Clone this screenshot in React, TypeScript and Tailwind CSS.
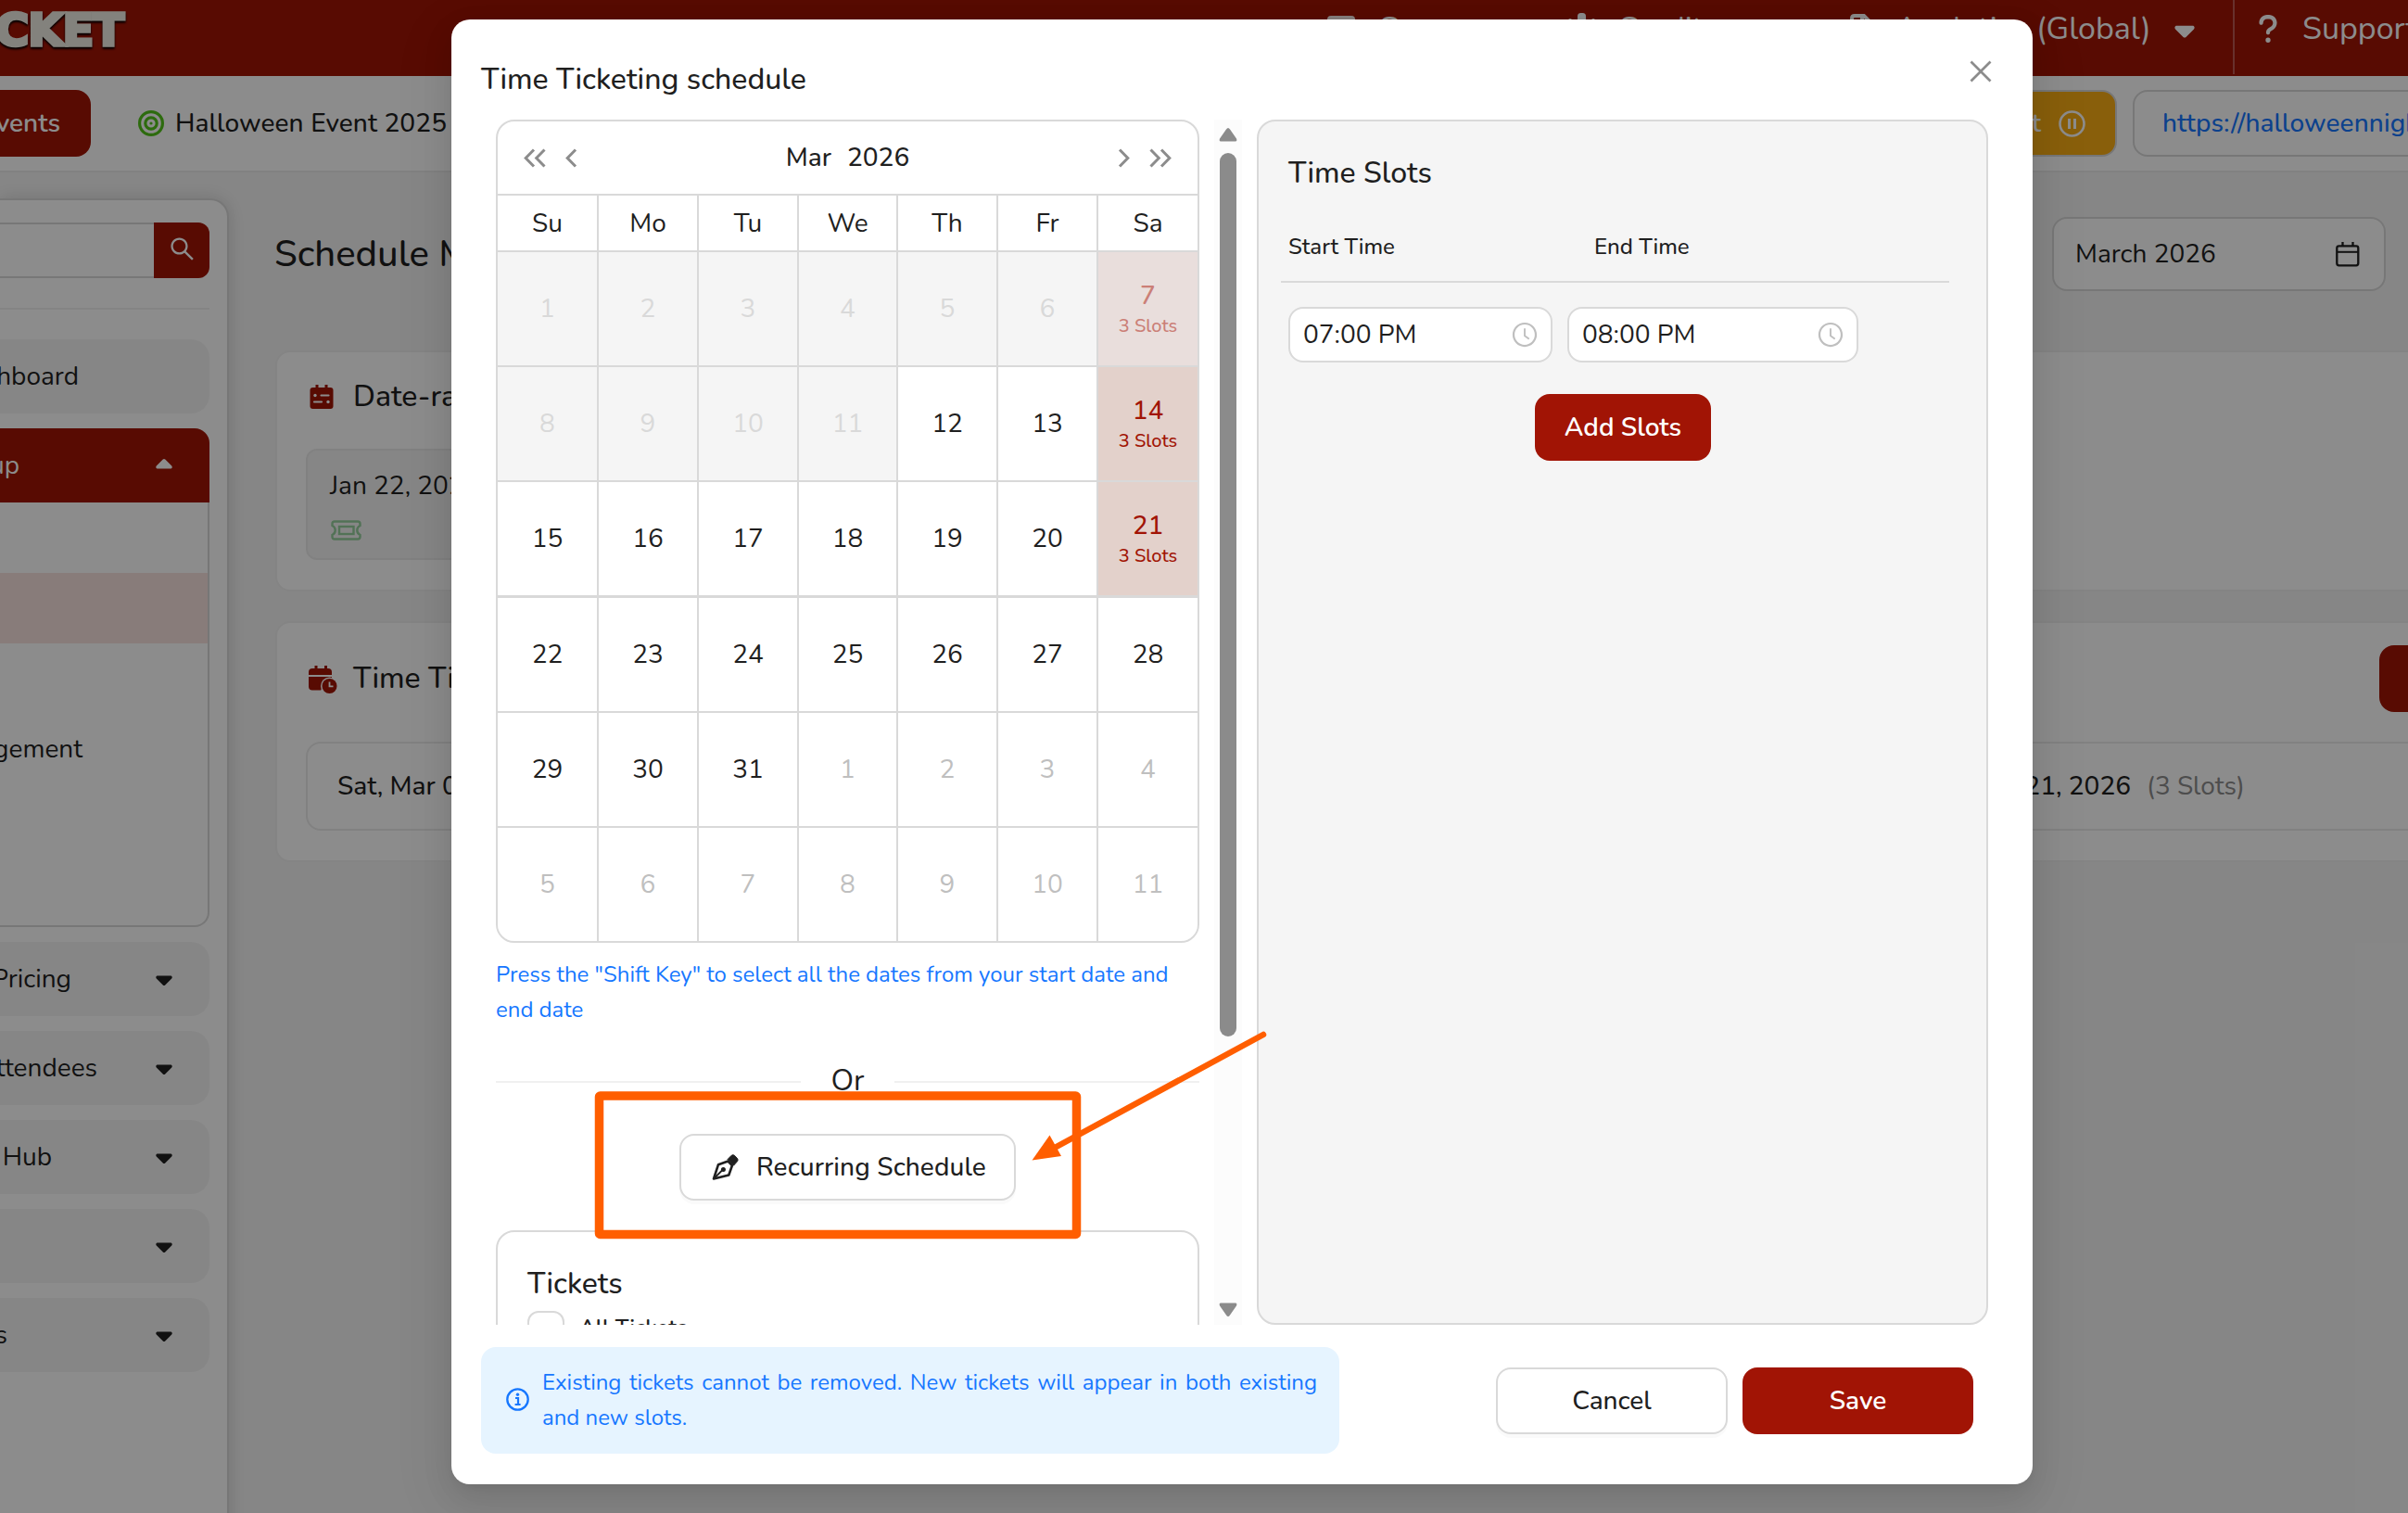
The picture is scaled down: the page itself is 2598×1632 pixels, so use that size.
import { useState } from "react";
import {
  AiOutlineClockCircle,
  AiOutlineClose,
  AiOutlineSearch,
} from "react-icons/ai";
import { FaCaretDown, FaCaretUp, FaQuestion } from "react-icons/fa6";

interface IDay {
  day: number;
  state: "past" | "active" | "outside";
  slots?: number;
}

const weekDays = ["Su", "Mo", "Tu", "We", "Th", "Fr", "Sa"];

const slotDays: Record<number, number> = { 7: 3, 14: 3, 21: 3 };

// Six full weeks starting on Sunday, Mar 1 2026
const days: IDay[] = Array.from({ length: 42 }, (_, index) => {
  const day = index + 1;
  if (day > 31) {
    return { day: day - 31, state: "outside" };
  }
  return { day, state: day < 12 ? "past" : "active", slots: slotDays[day] };
});

const menuItems = [
  { label: "Pricing", width: "w-[77px]" },
  { label: "Attendees", width: "w-[105px]" },
  { label: "Hub", width: "w-[56px]" },
  { label: "", width: "w-0" },
  { label: "s", width: "w-[8px]" },
];

const subMenuItems = [
  { label: "", active: false },
  { label: "", active: true },
  { label: "", active: false },
  { label: "Management", active: false },
  { label: "", active: false },
  { label: "", active: false },
];

function Chevrons({ count, right }: { count: number; right?: boolean }) {
  return (
    <svg
      className={right ? "rotate-180" : ""}
      width={count === 2 ? 24 : 13}
      height="21"
      viewBox={count === 2 ? "0 0 24 21" : "0 0 13 21"}
      fill="none"
      stroke="#8c8c8c"
      strokeWidth="3"
    >
      <path d="M11 1.5 2.2 10.5 11 19.5" />
      {count === 2 && <path d="M22.5 1.5 13.7 10.5 22.5 19.5" />}
    </svg>
  );
}

function PenIcon() {
  return (
    <svg width="29" height="29" viewBox="0 0 29 29" fill="none">
      <path
        d="M2 26.5 7 11.2 17.5 7.6l4.4 4.6-3.6 10.3L2 26.5Z"
        stroke="#1f1f1f"
        strokeWidth="2.6"
        strokeLinejoin="round"
      />
      <path d="M3 25.5 11.5 17" stroke="#1f1f1f" strokeWidth="1.8" />
      <circle cx="12.4" cy="16.4" r="2.5" fill="#1f1f1f" />
      <path
        d="M17 5.6 21.3 1.2q1.4-1 3 0l3.3 3.4q1 1.5 0 3L23.5 12.2Z"
        fill="#1f1f1f"
        stroke="#1f1f1f"
        strokeLinejoin="round"
      />
    </svg>
  );
}

function InfoIcon() {
  return (
    <svg
      className="mr-[14px] shrink-0 -translate-y-px"
      width="25"
      height="25"
      viewBox="0 0 25 25"
      fill="none"
      stroke="#1677ff"
    >
      <circle cx="12.5" cy="12.5" r="11.2" strokeWidth="2.3" />
      <path d="M10 11h3v7M9.6 18h6" strokeWidth="2.2" />
      <circle cx="12.5" cy="7.2" r="1.7" fill="#1677ff" stroke="none" />
    </svg>
  );
}

function CalendarOutline() {
  return (
    <svg width="26" height="27" viewBox="0 0 26 27" fill="none" stroke="#1f1f1f">
      <rect x="1.3" y="4.3" width="23" height="21" rx="2.2" strokeWidth="2.3" />
      <path d="M1.5 10.8h22.8" strokeWidth="2" />
      <path d="M7.5 0v5M18.5 0v5" strokeWidth="2.3" />
    </svg>
  );
}

function CalendarFilled() {
  return (
    <svg width="26" height="27" viewBox="0 0 26 27">
      <rect x="0.5" y="3" width="25" height="23" rx="3" fill="#a11405" />
      <path d="M8 0v6M18 0v6" stroke="#a11405" strokeWidth="3" />
      <path
        d="M12.5 11.5h8M5 18.5h8"
        stroke="#fff"
        strokeWidth="2.2"
        strokeLinecap="round"
      />
      <circle cx="6" cy="11.5" r="1.7" fill="#fff" />
      <circle cx="20" cy="18.5" r="1.7" fill="#fff" />
    </svg>
  );
}

function CalendarClock() {
  return (
    <svg width="31" height="30" viewBox="0 0 31 30">
      <path d="M0 10V7q0-4 4-4h17q4 0 4 4v3Z" fill="#a11405" />
      <path d="M8 0v5M18.5 0v5" stroke="#a11405" strokeWidth="3" />
      <path d="M0 12h25v3L13 26.5H4q-4 0-4-4Z" fill="#a11405" />
      <circle cx="22.5" cy="22" r="9.5" fill="#fff" />
      <circle cx="22.5" cy="22" r="8" fill="#a11405" />
      <path d="M22.5 17.5v4.8h4" fill="none" stroke="#fff" strokeWidth="1.8" />
    </svg>
  );
}

function TicketIcon() {
  return (
    <svg width="33" height="22" viewBox="0 0 33 22" fill="none" stroke="#95d09d">
      <path
        d="M4 1.5h25q2.500 0 2.500 2.500v2q-3.200 1.500-3.200 5t3.200 5v2q0 2.500-2.500 2.500H4q-2.500 0-2.500-2.500v-2q3.200-1.500 3.200-5t-3.200-5V4q0-2.500 2.500-2.500Z"
        strokeWidth="2.4"
      />
      <rect x="9" y="7" width="15.5" height="8" strokeWidth="2.4" />
    </svg>
  );
}

function TargetIcon() {
  return (
    <svg
      className="shrink-0"
      width="28"
      height="28"
      viewBox="0 0 28 28"
      fill="none"
      stroke="#52c41a"
    >
      <circle cx="14" cy="14" r="12.4" strokeWidth="3.2" />
      <circle cx="14" cy="14" r="6.2" strokeWidth="3.2" />
      <circle cx="14" cy="14" r="1.6" fill="#52c41a" stroke="none" />
    </svg>
  );
}

function TopBar() {
  return (
    <header className="flex h-[82px] bg-[#a11405] text-[34px] leading-[63px] text-white">
      <div className="flex w-[138px] shrink-0 justify-end overflow-hidden pr-[5px]">
        <span className="origin-right scale-x-[1.03] font-['DejaVu_Sans'] text-[48px] font-bold leading-[65px] tracking-[-1px] text-[#efede3] [-webkit-text-stroke:3.500px_#efede3] drop-shadow-[0_2px_1px_#000]">
          CKET
        </span>
      </div>
      <div className="ml-[1294px] flex w-[257px] shrink-0">
        <span className="mt-[17px] h-7 w-[30px] rounded bg-white/90" />
        <span className="ml-[24px]">Groups</span>
      </div>
      <div className="flex w-[306px] shrink-0">
        <svg className="mt-[14px]" width="34" height="34" viewBox="0 0 34 34" fill="#fff">
          <rect x="13" width="9" height="14" rx="3.5" />
          <rect x="3" y="6" width="4" height="10" rx="2" />
          <rect x="28" y="6" width="4" height="10" rx="2" />
        </svg>
        <span className="ml-[22px]">Credits</span>
      </div>
      <div className="flex w-[414px] shrink-0">
        <svg
          className="mt-[14px] shrink-0"
          width="28"
          height="34"
          viewBox="0 0 28 34"
          fill="none"
          stroke="#fff"
          strokeWidth="4"
        >
          <path d="M3 32V6q0-3 3-3h10l9 9v20M14 3v10h10" />
        </svg>
        <span className="ml-[22px] w-[143px]">Analytics</span>
        <span className="ml-[9px] w-[120px]">(Global)</span>
        <FaCaretDown className="mt-[15px] ml-[23px] size-[34px] shrink-0" />
      </div>
      <div className="flex h-20 shrink-0 border-l-2 border-white/30 pl-[21px]">
        <FaQuestion className="mt-[14px] h-[34px] w-[30px]" />
        <span className="ml-[22px]">Support</span>
      </div>
    </header>
  );
}

function EventBar() {
  return (
    <div className="flex h-[104px] items-center border-b-2 border-[#ebebeb] bg-white">
      <div className="flex h-[72px] w-[98px] shrink-0 items-center justify-end rounded-r-2xl bg-[#a11405] pr-[33px] font-semibold text-white">
        Events
      </div>
      <div className="ml-[51px] flex w-[331px] shrink-0 items-center">
        <TargetIcon />
        <span className="ml-[12px] whitespace-nowrap font-medium tracking-[0.1px]">
          Halloween Event 2025
        </span>
      </div>
      <div className="ml-[1504px] flex h-[72px] w-[300px] shrink-0 items-center justify-end rounded-2xl border-2 border-[#d9d9d9] bg-[#faad14] pr-[32px] font-semibold text-white">
        Draft
        <svg
          className="ml-[19px]"
          width="29"
          height="29"
          viewBox="0 0 29 29"
          fill="none"
          stroke="#fff"
          strokeWidth="2.6"
        >
          <circle cx="14.5" cy="14.5" r="13" />
          <path d="M11.5 9v11M17.5 9v11" strokeWidth="3" />
        </svg>
      </div>
      <div className="ml-[17px] flex h-[72px] w-[360px] shrink-0 items-center rounded-2xl border-2 border-[#d9d9d9] pl-[30px] font-medium tracking-[0.1px] text-[#1677ff]">
        https://halloweennight
      </div>
    </div>
  );
}

function Sidebar() {
  return (
    <aside className="mt-[28px] h-[1500px] w-[247px] shrink-0 rounded-tr-[20px] border-t-2 border-r-2 border-[#d9d9d9] bg-white pt-[24px] shadow-[0_0_20px_rgba(0,0,0,0.15)]">
      <div className="flex h-[60px] w-[226px]">
        <div className="flex-1 border-y-2 border-[#d9d9d9]" />
        <div className="flex w-[60px] items-center justify-center rounded-r-xl bg-[#a11405] text-white">
          <AiOutlineSearch className="size-[31px] -translate-y-[2px]" />
        </div>
      </div>
      <div className="mt-[32px] h-0.5 w-[226px] bg-[#f0f0f0]" />
      <div className="mt-[32px] flex h-20 w-[226px] items-center rounded-r-[20px] bg-[#f5f5f5]">
        <span className="flex w-[85px] justify-end">Dashboard</span>
      </div>
      <div className="mt-4 flex h-20 w-[226px] items-center justify-between rounded-tr-2xl bg-[#a11405] pr-[35px] text-white">
        <span className="flex w-[21px] justify-end">Setup</span>
        <FaCaretUp className="size-7" />
      </div>
      <div className="w-[226px] rounded-br-2xl border-r-2 border-b-2 border-[#d9d9d9]">
        {subMenuItems.map((item, index) => (
          <div
            key={index}
            className={`flex h-[76px] items-center ${item.active ? "bg-[#f7e2df]" : ""}`}
          >
            <span className="flex w-[89px] justify-end">{item.label}</span>
          </div>
        ))}
      </div>
      {menuItems.map((item, index) => (
        <div
          key={index}
          className="mt-4 flex h-20 w-[226px] items-center justify-between rounded-r-[20px] bg-[#f5f5f5] pr-[35px]"
        >
          <span className={`flex justify-end whitespace-nowrap ${item.width}`}>
            {item.label}
          </span>
          <FaCaretDown className="size-7" />
        </div>
      ))}
    </aside>
  );
}

function SchedulePage() {
  return (
    <main className="flex w-[2351px] shrink-0 flex-col pl-[50px]">
      <div className="flex h-[192px] items-center pb-4">
        <h1 className="w-[1917px] -translate-x-px text-[40px] font-medium">
          Schedule Management
        </h1>
        <div className="flex h-20 w-[360px] items-center justify-between rounded-2xl border-2 border-[#d9d9d9] bg-white pr-[26px] pl-[23px]">
          <span>March 2026</span>
          <CalendarOutline />
        </div>
      </div>

      <section className="h-[260px] w-[2400px] rounded-2xl border-2 border-[#f0f0f0] bg-white pt-[25px] pl-[31px]">
        <div className="flex h-[46px] items-center text-[32px] font-medium">
          <span className="ml-[4px] w-[47px]">
            <CalendarFilled />
          </span>
          Date-range
        </div>
        <div className="mt-[33px] h-[120px] w-[600px] rounded-xl border-2 border-[#ececec] bg-[#f5f5f5] pt-[18px] pl-6">
          <p className="leading-[40px]">Jan 22, 2026</p>
          <div className="mt-[17px] ml-px">
            <TicketIcon />
          </div>
        </div>
      </section>

      <section className="mt-[32px] h-[260px] w-[2400px] rounded-2xl border-2 border-[#f0f0f0] bg-white pl-[31px]">
        <div className="flex h-[128px] items-center text-[32px] font-medium">
          <span className="ml-[3px] w-[48px] -translate-y-[3px]">
            <CalendarClock />
          </span>
          <span className="w-[2186px] -translate-y-[4px]">Time Ticketing</span>
          <span className="h-[72px] w-[110px] -translate-y-[4px] rounded-l-2xl bg-[#a11405]" />
        </div>
        <div className="flex h-[96px] items-center rounded-2xl border-2 border-[#ebebeb] pl-[32px]">
          <span className="w-[1786px] font-medium">Sat, Mar 07, 2026</span>
          <span className="flex w-[149px] justify-end whitespace-nowrap font-medium">
            Mar 21, 2026
          </span>
          <span className="ml-[17px] text-[#8c8c8c]">(3 Slots)</span>
        </div>
      </section>
    </main>
  );
}

function Calendar() {
  return (
    <div className="h-[888px] w-[759px] shrink-0 overflow-hidden rounded-[20px] border-2 border-[#d9d9d9]">
      <div className="flex h-[78px] items-center justify-between px-[28px]">
        <div className="flex w-[100px] items-center gap-[21px]">
          <Chevrons count={2} />
          <Chevrons count={1} />
        </div>
        <div className="flex gap-[17px] font-medium">
          <span>Mar</span>
          <span>2026</span>
        </div>
        <div className="flex w-[100px] items-center justify-end gap-[21px]">
          <Chevrons count={1} right />
          <Chevrons count={2} right />
        </div>
      </div>
      <div className="grid h-[807px] grid-cols-[107px_repeat(2,106px)_105px_repeat(2,106px)_1fr] gap-0.5 border-t-2 border-[#d9d9d9] bg-[#d9d9d9]">
        {weekDays.map((name) => (
          <div key={name} className="flex h-[59px] items-center justify-center bg-white">
            {name}
          </div>
        ))}
        {days.map((item, index) => {
          let style = "bg-white";
          if (item.state === "past") style = "bg-[#f5f5f5] text-[#d9d9d9]";
          if (item.state === "outside") style = "bg-white text-[#bfbfbf]";
          if (item.slots) {
            style =
              item.state === "past"
                ? "bg-[#e9dedc] pt-[2px] text-[#cb7f77]"
                : "bg-[#e3d1cb] pt-[2px] text-[#a11405]";
          }
          return (
            <div
              key={index}
              className={`flex flex-col items-center justify-center ${
                index >= 35 ? "h-[123px]" : "h-[122px]"
              } ${style}`}
            >
              <span className={item.slots ? "font-medium leading-[36px]" : ""}>
                {item.day}
              </span>
              {item.slots && (
                <span className="text-[20px] leading-[30px] font-medium">
                  {item.slots} Slots
                </span>
              )}
            </div>
          );
        })}
      </div>
    </div>
  );
}

function ScrollBar() {
  return (
    <div className="ml-[16px] flex h-[1300px] w-[30px] shrink-0 flex-col items-center bg-[#fcfcfc] pt-[9px] pb-[9px]">
      <svg width="20" height="15" viewBox="0 0 20 15" fill="#8b8b8b">
        <path d="M10 0q1 0 2 1.500l7 10q1 3-1 3H2q-2 0-1-3l7-10Q9 0 10 0Z" />
      </svg>
      <div className="mt-[12px] h-[953px] w-[18px] rounded-full bg-[#8b8b8b]" />
      <svg className="mt-auto" width="20" height="15" viewBox="0 0 20 15" fill="#8b8b8b">
        <path d="M10 15q-1 0-2-1.500l-7-10q-1-3 1-3h16q2 0 1 3l-7 10q-1 1.500-2 1.500Z" />
      </svg>
    </div>
  );
}

function TimeInput({ value, width }: { value: string; width: string }) {
  return (
    <div
      className={`flex h-[60px] items-center justify-between rounded-2xl border-2 border-[#d9d9d9] bg-white pr-[13px] pl-[14px] ${width}`}
    >
      <span>{value}</span>
      <AiOutlineClockCircle className="size-[30px] text-[#bfbfbf]" />
    </div>
  );
}

function TimeSlots() {
  return (
    <div className="ml-[16px] h-[1300px] w-[789px] rounded-[20px] border-2 border-[#d9d9d9] bg-[#f5f5f5]">
      <h3 className="mt-[32px] ml-[32px] text-[32px] leading-[48px] font-medium">
        Time Slots
      </h3>
      <div className="mt-[36px] ml-[24px] flex w-[721px] border-b-2 border-[#d9d9d9] pb-[18px] pl-2 text-[24px] leading-[38px] font-medium">
        <span className="w-[330px]">Start Time</span>
        <span>End Time</span>
      </div>
      <div className="mt-[26px] ml-[32px] flex gap-4">
        <TimeInput value="07:00 PM" width="w-[285px]" />
        <TimeInput value="08:00 PM" width="w-[314px]" />
      </div>
      <button className="mt-[34px] ml-[298px] h-[72px] w-[190px] rounded-2xl bg-[#a11405] font-semibold text-white">
        Add Slots
      </button>
    </div>
  );
}

// Orange frame and arrow pointing at the recurring schedule button
function Highlight() {
  return (
    <svg
      className="pointer-events-none absolute top-[1090px] left-[630px]"
      width="750"
      height="260"
      viewBox="630 1090 750 260"
      fill="none"
      stroke="#ff5e00"
    >
      <rect
        x="646.5"
        y="1182"
        width="515"
        height="149.5"
        rx="1"
        strokeWidth="9.5"
        strokeLinejoin="round"
      />
      <path d="M1363 1116 1136 1239" strokeWidth="6.5" strokeLinecap="round" />
      <path d="m1113.5 1251.5 19-27 12.5 22.5Z" fill="#ff5e00" stroke="none" />
    </svg>
  );
}

function ScheduleModal({ onClose }: { onClose: () => void }) {
  return (
    <div className="absolute inset-0 flex items-start bg-black/45 pt-[21px] pl-[487px]">
      <div className="flex h-[1580px] w-[1706px] flex-col rounded-[20px] bg-white shadow-[0_12px_32px_rgba(0,0,0,0.1),0_6px_12px_-8px_rgba(0,0,0,0.12),0_18px_56px_16px_rgba(0,0,0,0.05)]">
        <div className="flex h-[108px] justify-between pt-[41px] pr-[39px] pl-[32px]">
          <h2 className="text-[32px] leading-[48px] font-medium">
            Time Ticketing schedule
          </h2>
          <button onClick={onClose} className="-mt-[2px] h-[34px] text-[#8c8c8c]">
            <AiOutlineClose className="size-[34px]" />
          </button>
        </div>

        <div className="flex h-[1300px] pl-12">
          <div className="h-[1300px] w-[759px] shrink-0 overflow-hidden">
            <Calendar />
            <p className="mt-[15px] text-[24px] leading-[38px] text-[#1677ff]">
              Press the "Shift Key" to select all the dates from your start date and
              end date
            </p>
            <div className="mt-[34px] flex h-[48px] items-center">
              <div className="h-0.5 flex-1 translate-y-px bg-[#f0f0f0]" />
              <span className="w-[101px] text-center text-[32px]">Or</span>
              <div className="h-0.5 flex-1 translate-y-px bg-[#f0f0f0]" />
            </div>
            <button className="mx-auto mt-[33px] flex h-[72px] w-[363px] items-center rounded-2xl border-2 border-[#d9d9d9] bg-white pl-[33px] font-medium shadow-[0_4px_0_rgba(0,0,0,0.02)]">
              <PenIcon />
              <span className="ml-[19px] tracking-[0.1px]">Recurring Schedule</span>
            </button>
            <div className="mt-[32px] h-[300px] rounded-[20px] border-2 border-[#d9d9d9] pt-[30px] pl-[32px]">
              <h3 className="text-[32px] leading-[52px] font-medium">Tickets</h3>
              <div className="mt-[3px] flex items-start">
                <span className="size-[40px] rounded-xl border-2 border-[#d9d9d9]" />
                <span className="ml-[16px] text-[24px] leading-[36px] font-semibold">
                  All Tickets
                </span>
              </div>
            </div>
          </div>
          <ScrollBar />
          <TimeSlots />
        </div>

        <div className="mt-[24px] flex items-center pl-[32px]">
          <div className="flex h-[115px] w-[926px] items-center rounded-2xl bg-[#e6f4ff] pr-[24px] pl-[27px] text-[24px] leading-[38px] text-[#1677ff]">
            <InfoIcon />
            <p className="-translate-y-px text-justify">
              Existing tickets cannot be removed. New tickets will appear in both
              existing and new slots.
            </p>
          </div>
          <button
            onClick={onClose}
            className="ml-[169px] h-[72px] w-[250px] rounded-2xl border-2 border-[#d9d9d9] font-medium shadow-[0_4px_0_rgba(0,0,0,0.02)]"
          >
            Cancel
          </button>
          <button className="ml-4 h-[72px] w-[249px] rounded-2xl bg-[#a11405] font-semibold text-white">
            Save
          </button>
        </div>
      </div>
      <Highlight />
    </div>
  );
}

export default function App() {
  const [open, setOpen] = useState<boolean>(true);

  return (
    <div className="relative h-[1632px] w-[2598px] overflow-hidden bg-[#f5f5f5] font-['Nunito','Lato',sans-serif] text-[28px] text-[#1f1f1f]">
      <TopBar />
      <EventBar />
      <div className="flex">
        <Sidebar />
        <SchedulePage />
      </div>
      {open && <ScheduleModal onClose={() => setOpen(false)} />}
    </div>
  );
}
